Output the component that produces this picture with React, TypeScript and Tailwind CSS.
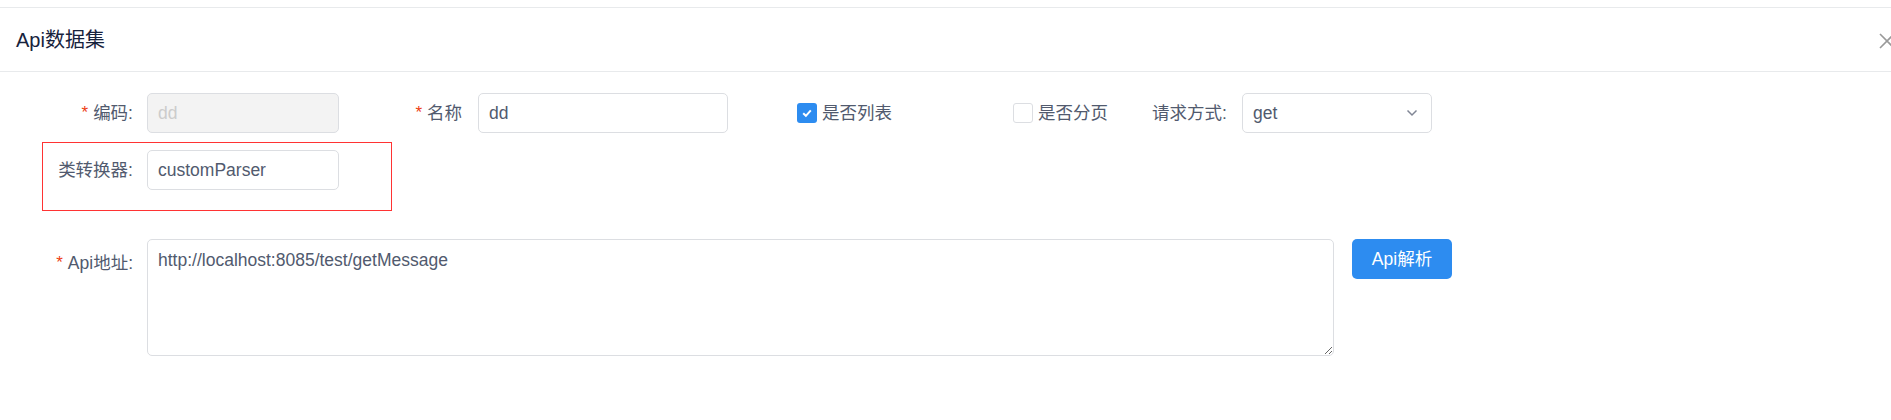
import React from 'react';

const font = { fontFamily: '"Liberation Sans", Arial, "Noto Sans CJK SC", sans-serif' };

function Star() {
    return <span className="text-[#ed4014] mr-[5px] text-[17px]">*</span>;
}

export default function App() {
    return (
        <div className="relative w-[1891px] h-[420px] bg-white text-[17.5px] text-[#515a6e] overflow-hidden" style={font}>
            <div className="h-[7px]" />
            {/* header */}
            <div className="h-[65px] border-y border-[#e8eaec] flex items-center pl-[16px] relative">
                <span className="text-[20px] text-[#17233d]">Api数据集</span>
                <svg className="absolute left-[1877px] top-[23px]" width="20" height="20" viewBox="0 0 20 20">
                    <path d="M3 3 L17 17 M17 3 L3 17" stroke="#999" strokeWidth="1.6" />
                </svg>
            </div>

            {/* row 1 */}
            <div className="flex items-center mt-[21px] h-[40px]">
                <div className="w-[147px] flex justify-end items-center pr-[14px]">
                    <Star />编码:
                </div>
                <input disabled value="dd" readOnly className="w-[192px] h-[40px] px-[10px] rounded-[5px] border border-[#dcdee2] bg-[#f3f3f3] text-[#ccc] outline-none" />
                <div className="w-[139px] flex justify-end items-center pr-[16px]">
                    <Star />名称
                </div>
                <input value="dd" readOnly className="w-[250px] h-[40px] px-[10px] rounded-[5px] border border-[#dcdee2] text-[#515a6e] outline-none" />
                <label className="flex items-center ml-[69px] gap-[5px]">
                    <span className="w-[20px] h-[20px] rounded-[3px] bg-[#2d8cf0] flex items-center justify-center">
                        <svg width="12" height="12" viewBox="0 0 12 12">
                            <path d="M2.2 6.2 L4.9 8.8 L9.8 3.4" fill="none" stroke="#fff" strokeWidth="2" />
                        </svg>
                    </span>
                    是否列表
                </label>
                <label className="flex items-center ml-[121px] gap-[5px]">
                    <span className="w-[20px] h-[20px] rounded-[3px] border border-[#dcdee2] bg-white" />
                    是否分页
                </label>
                <span className="ml-[44px] w-[90px]">请求方式:</span>
                <div className="w-[190px] h-[40px] px-[10px] rounded-[5px] border border-[#dcdee2] flex items-center justify-between">
                    <span>get</span>
                    <svg width="12" height="8" viewBox="0 0 12 8" className="mr-[3px]">
                        <path d="M1.5 1.5 L6 6 L10.5 1.5" fill="none" stroke="#808695" strokeWidth="1.5" />
                    </svg>
                </div>
            </div>

            {/* row 2 */}
            <div className="flex items-center mt-[17px] h-[40px]">
                <div className="w-[147px] flex justify-end pr-[14px]">类转换器:</div>
                <input value="customParser" readOnly className="w-[192px] h-[40px] px-[10px] rounded-[5px] border border-[#dcdee2] text-[#515a6e] outline-none" />
            </div>
            <div className="absolute left-[42px] top-[142px] w-[350px] h-[69px] border border-[#f33]" />

            {/* row 3 */}
            <div className="flex items-start mt-[49px]">
                <div className="w-[147px] flex justify-end pr-[14px] pt-[11px]">
                    <Star />Api地址:
                </div>
                <textarea
                    readOnly
                    defaultValue="http://localhost:8085/test/getMessage"
                    className="w-[1187px] h-[117px] px-[10px] py-[7px] rounded-[5px] border border-[#dcdee2] text-[#515a6e] outline-none resize"
                    style={font}
                />
                <button className="ml-[18px] w-[100px] h-[40px] rounded-[5px] bg-[#2d8cf0] text-white">Api解析</button>
            </div>
        </div>
    );
}
